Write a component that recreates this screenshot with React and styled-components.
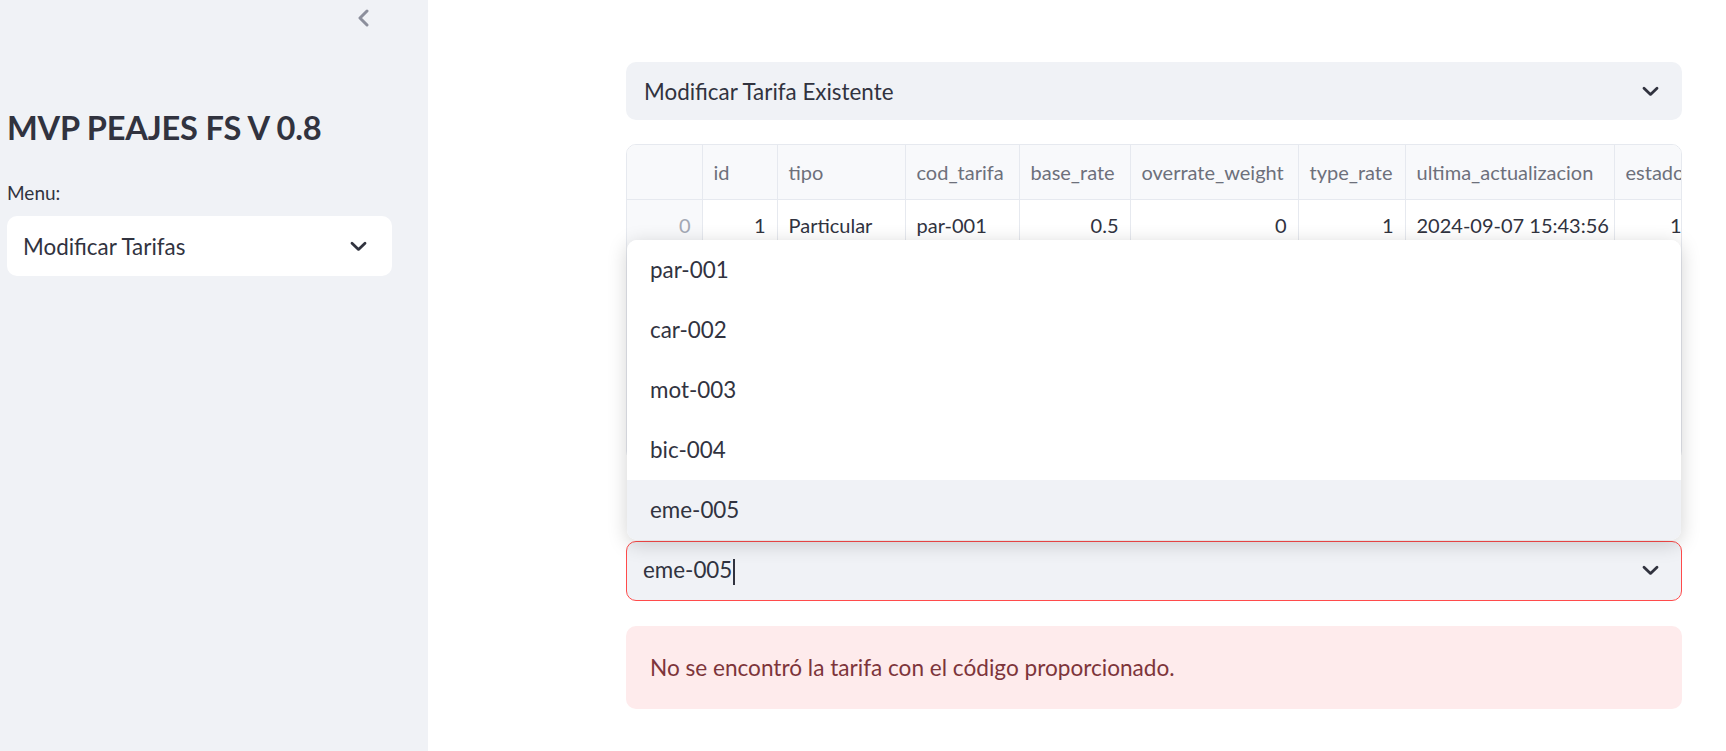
import React from 'react';
import styled, { createGlobalStyle } from 'styled-components';

const GlobalStyle = createGlobalStyle`
  html, body {
    margin: 0;
    padding: 0;
    background: #ffffff;
    font-family: Lato, "Noto Sans", sans-serif;
    color: #31333f;
  }
  * {
    box-sizing: border-box;
  }
`;

const Page = styled.div`
  display: flex;
  height: 751px;
  overflow: hidden;
`;

const Sidebar = styled.aside`
  width: 428px;
  flex-shrink: 0;
  background: #f0f2f6;
  padding: 0 36px 0 7px;
  display: flex;
  flex-direction: column;
`;

const SidebarTop = styled.div`
  display: flex;
  justify-content: flex-end;
  padding: 9px 22px 0 0;
  height: 34px;
`;

const Title = styled.h1`
  margin: 70px 0 0 0;
  font-size: 32.6px;
  line-height: 48px;
  font-weight: 700;
  color: #31333f;
  letter-spacing: -0.2px;
`;

const Label = styled.label`
  display: block;
  font-size: 19px;
  line-height: 28px;
  margin: 27px 0 9px 0;
  color: #31333f;
`;

const SelectBox = styled.div`
  display: flex;
  align-items: center;
  justify-content: space-between;
  height: ${p => (p.tall ? 60 : 58)}px;
  padding: 0 ${p => p.padRight || 22}px 0 ${p => p.padLeft || 16}px;
  border-radius: 10px;
  background: ${p => (p.white ? '#ffffff' : '#f0f2f6')};
  border: 1px solid ${p => (p.error ? '#ff4b4b' : 'transparent')};
  font-size: 22.4px;
  color: #31333f;
  position: relative;
`;

const Main = styled.main`
  flex: 1;
  padding: 62px 0 0 198px;
`;

const Content = styled.div`
  width: 1056px;
  display: flex;
  flex-direction: column;
`;

const TableWrap = styled.div`
  margin-top: 24px;
  border: 1px solid #e6e9ef;
  border-radius: 10px;
  overflow: hidden;
`;

const Table = styled.table`
  border-collapse: collapse;
  table-layout: fixed;
  width: 1066px;
  font-size: 20px;
`;

const Th = styled.th`
  height: 54px;
  background: #f8f9fb;
  color: #6d707b;
  font-weight: 400;
  text-align: left;
  padding: 0 11px;
  border-right: 1px solid #e6e9ef;
  border-bottom: 1px solid #e6e9ef;
  white-space: nowrap;
  overflow: hidden;
`;

const Td = styled.td`
  height: 52px;
  padding: 0 11px;
  text-align: ${p => (p.num ? 'right' : 'left')};
  color: ${p => (p.index ? '#a3a8b4' : '#31333f')};
  background: ${p => (p.index ? '#f8f9fb' : '#ffffff')};
  border-right: 1px solid #e6e9ef;
  border-bottom: 1px solid #e6e9ef;
  white-space: nowrap;
  overflow: hidden;
`;

const Field = styled.div`
  margin-top: 44px;
  position: relative;
`;

const HiddenLabel = styled.div`
  font-size: 19px;
  line-height: 26px;
  margin-bottom: 10px;
`;

const Menu = styled.ul`
  position: absolute;
  left: 0;
  right: 0;
  bottom: 60px;
  margin: 0;
  padding: 0;
  list-style: none;
  background: #ffffff;
  border-radius: 10px;
  overflow: hidden;
  box-shadow: 0 4px 20px rgba(0, 0, 0, 0.18);
  z-index: 5;
`;

const MenuItem = styled.li`
  height: 60px;
  display: flex;
  align-items: center;
  padding-left: 23px;
  font-size: 22.4px;
  color: #31333f;
  background: ${p => (p.active ? '#f0f2f6' : '#ffffff')};
`;

const Caret = styled.span`
  display: inline-block;
  width: 2px;
  height: 26px;
  background: #31333f;
  margin-left: 1px;
  vertical-align: middle;
`;

const Alert = styled.div`
  margin-top: 25px;
  height: 83px;
  border-radius: 10px;
  background: #feebec;
  color: #7d353b;
  font-size: 22.6px;
  display: flex;
  align-items: center;
  padding-left: 24px;
`;

const ChevronDown = () => (
  <svg width="17" height="11" viewBox="0 0 17 11" fill="none">
    <path d="M2 2.2 L8.5 8.4 L15 2.2" stroke="#31333f" strokeWidth="2.8" strokeLinecap="round" strokeLinejoin="round" />
  </svg>
);

const ChevronLeft = () => (
  <svg width="13" height="18" viewBox="0 0 13 18" fill="none">
    <path d="M10 2 L3 9 L10 16" stroke="#8c8f9c" strokeWidth="3" strokeLinecap="round" strokeLinejoin="round" />
  </svg>
);

const columns = [
  { key: 'idx', label: '', w: 75 },
  { key: 'id', label: 'id', w: 75 },
  { key: 'tipo', label: 'tipo', w: 128 },
  { key: 'cod', label: 'cod_tarifa', w: 114 },
  { key: 'base', label: 'base_rate', w: 111 },
  { key: 'over', label: 'overrate_weight', w: 168 },
  { key: 'type', label: 'type_rate', w: 107 },
  { key: 'ult', label: 'ultima_actualizacion', w: 209 },
  { key: 'est', label: 'estado', w: 79 },
];

const rows = [
  ['0', '1', 'Particular', 'par-001', '0.5', '0', '1', '2024-09-07 15:43:56', '1'],
  ['1', '2', 'Carga', 'car-002', '1.2', '0.3', '2', '2024-09-07 15:43:56', '1'],
  ['2', '3', 'Moto', 'mot-003', '0.3', '0', '1', '2024-09-07 15:43:56', '1'],
  ['3', '4', 'Bicicleta', 'bic-004', '0.1', '0', '1', '2024-09-07 15:43:56', '1'],
  ['4', '5', 'Emergencia', 'eme-005', '0', '0', '1', '2024-09-07 15:43:56', '1'],
];

const numeric = [true, true, false, false, true, true, true, false, true];

const codes = ['par-001', 'car-002', 'mot-003', 'bic-004', 'eme-005'];

export default function App() {
  return (
    <Page>
      <GlobalStyle />
      <Sidebar>
        <SidebarTop>
          <ChevronLeft />
        </SidebarTop>
        <Title>MVP PEAJES FS V 0.8</Title>
        <Label>Menu:</Label>
        <SelectBox white tall padLeft={15} padRight={24}>
          <span>Modificar Tarifas</span>
          <ChevronDown />
        </SelectBox>
      </Sidebar>
      <Main>
        <Content>
          <SelectBox padLeft={17}>
            <span>Modificar Tarifa Existente</span>
            <ChevronDown />
          </SelectBox>
          <TableWrap>
            <Table>
              <colgroup>
                {columns.map(c => (
                  <col key={c.key} style={{ width: c.w }} />
                ))}
              </colgroup>
              <thead>
                <tr>
                  {columns.map(c => (
                    <Th key={c.key}>{c.label}</Th>
                  ))}
                </tr>
              </thead>
              <tbody>
                {rows.map((r, i) => (
                  <tr key={i}>
                    {r.map((v, j) => (
                      <Td key={j} num={numeric[j]} index={j === 0}>
                        {v}
                      </Td>
                    ))}
                  </tr>
                ))}
              </tbody>
            </Table>
          </TableWrap>
          <Field>
            <HiddenLabel>Ingrese el código de la tarifa:</HiddenLabel>
            <SelectBox error tall padLeft={16}>
              <span>
                eme-005
                <Caret />
              </span>
              <ChevronDown />
              <Menu>
                {codes.map((c, i) => (
                  <MenuItem key={c} active={i === codes.length - 1}>
                    {c}
                  </MenuItem>
                ))}
              </Menu>
            </SelectBox>
          </Field>
          <Alert>No se encontró la tarifa con el código proporcionado.</Alert>
        </Content>
      </Main>
    </Page>
  );
}
